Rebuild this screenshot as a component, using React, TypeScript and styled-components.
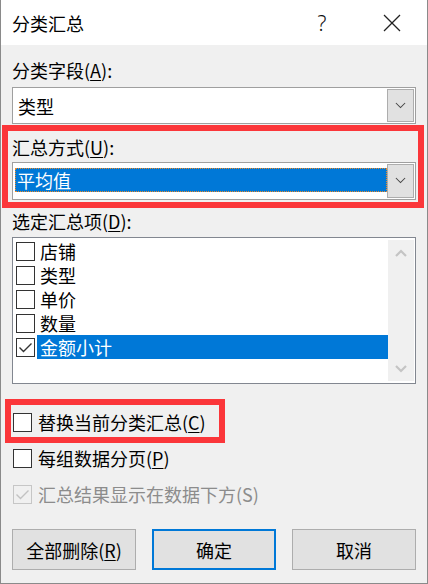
import React from "react";
import styled, { createGlobalStyle } from "styled-components";

const Global = createGlobalStyle`
  html, body { margin: 0; padding: 0; background: #f0f0f0; }
  body { font-family: "Noto Sans CJK SC", "Microsoft YaHei", sans-serif; }
  * { box-sizing: border-box; }
`;

const Window = styled.div`
  width: 428px;
  height: 584px;
  display: flex;
  flex-direction: column;
  background: #f0f0f0;
  border-left: 1px solid #8a8a8a;
  border-right: 1px solid #8a8a8a;
  border-bottom: 1px solid #8a8a8a;
  color: #000;
  font-size: 18px;
  overflow: hidden;
`;

const TitleBar = styled.div`
  height: 45px;
  flex: none;
  background: #fff;
  display: flex;
  align-items: center;
  padding-left: 11px;
`;

const Title = styled.div`
  flex: 1;
  line-height: 24px;
  font-size: 18px;
`;

const TitleButton = styled.div<{ $mr: number }>`
  width: 60px;
  height: 45px;
  margin-right: ${(p) => p.$mr}px;
  display: flex;
  align-items: center;
  justify-content: center;
  font-size: 21px;
  font-family: "Noto Sans", sans-serif;
  font-weight: 300;
  color: #111;
`;

const Body = styled.div`
  flex: 1;
  display: flex;
  flex-direction: column;
  padding: 13px 11px 0 11px;
`;

const Label = styled.div<{ $mt?: number }>`
  height: 24px;
  line-height: 24px;
  margin-top: ${(p) => p.$mt ?? 0}px;
  white-space: nowrap;
`;

const U = styled.span`
  text-decoration: underline;
  text-underline-offset: 2px;
`;

const Combo = styled.div<{ $mt: number; $h: number }>`
  margin-top: ${(p) => p.$mt}px;
  height: ${(p) => p.$h}px;
  border: 1px solid #9f9f9f;
  background: #fff;
  display: flex;
  align-items: center;
  padding: 1px;
`;

const ComboValue = styled.div<{ $selected?: boolean }>`
  flex: 1;
  align-self: ${(p) => (p.$selected ? "center" : "stretch")};
  height: ${(p) => (p.$selected ? "24px" : "auto")};
  margin: ${(p) => (p.$selected ? "0 0 2px 1px" : "0")};
  display: flex;
  align-items: center;
  padding-left: ${(p) => (p.$selected ? "2px" : "4px")};
  background: ${(p) => (p.$selected ? "#0078d7" : "transparent")};
  color: ${(p) => (p.$selected ? "#fff" : "#000")};
  outline: ${(p) => (p.$selected ? "1px dotted #f08a24" : "none")};
  outline-offset: -1px;
  line-height: 24px;
`;

const DropButton = styled.div`
  width: 27px;
  align-self: stretch;
  background: #e1e1e1;
  border: 1px solid #adadad;
  display: flex;
  align-items: center;
  justify-content: center;
`;

const Group = styled.div`
  position: relative;
  display: flex;
  flex-direction: column;
  margin-top: 11px;
`;

const RedFrame = styled.div<{ $t: number; $l: number; $r: number; $b: number }>`
  position: absolute;
  top: ${(p) => p.$t}px;
  left: ${(p) => p.$l}px;
  right: ${(p) => p.$r}px;
  bottom: ${(p) => p.$b}px;
  border: 6px solid #fb363a;
  pointer-events: none;
`;

const List = styled.div`
  margin-top: 4px;
  height: 147px;
  border: 1px solid #828790;
  background: #fff;
  display: flex;
  padding: 1px;
`;

const ListItems = styled.div`
  flex: 1;
  display: flex;
  flex-direction: column;
`;

const ListRow = styled.div`
  height: 24px;
  display: flex;
  align-items: center;
  padding-left: 2px;
`;

const ListText = styled.div<{ $selected?: boolean }>`
  flex: 1;
  height: 24px;
  line-height: 24px;
  margin-left: 2px;
  padding-left: 3px;
  background: ${(p) => (p.$selected ? "#0078d7" : "transparent")};
  color: ${(p) => (p.$selected ? "#fff" : "#000")};
`;

const ScrollBar = styled.div`
  width: 26px;
  margin-top: 1px;
  margin-bottom: 1px;
  background: #f0f0f0;
  display: flex;
  flex-direction: column;
  justify-content: space-between;
  align-items: center;
  padding: 9px 0 8px;
`;

const Box = styled.div<{ $disabled?: boolean }>`
  width: 19px;
  height: 19px;
  flex: none;
  border: 1px solid ${(p) => (p.$disabled ? "#c6c6c6" : "#333")};
  background: ${(p) => (p.$disabled ? "#f0f0f0" : "#fff")};
  display: flex;
  align-items: center;
  justify-content: center;
`;

const CheckRow = styled.div<{ $mt: number; $disabled?: boolean }>`
  position: relative;
  align-self: flex-start;
  margin-top: ${(p) => p.$mt}px;
  margin-left: 1px;
  height: 24px;
  display: flex;
  align-items: center;
  gap: 6px;
  line-height: 24px;
  color: ${(p) => (p.$disabled ? "#8c8c8c" : "#000")};
  white-space: nowrap;
`;

const CheckText = styled.span`
  line-height: 24px;
`;

const ButtonBar = styled.div`
  margin-top: 23px;
  display: flex;
  gap: 16px;
`;

const Button = styled.div<{ $default?: boolean }>`
  width: 125px;
  height: 41px;
  background: #e1e1e1;
  border: ${(p) => (p.$default ? "2px solid #0078d7" : "1px solid #adadad")};
  display: flex;
  align-items: center;
  justify-content: center;
  line-height: 24px;
`;

const Chevron = ({ color = "#444", up = false, w = 11 }: { color?: string; up?: boolean; w?: number }) => (
  <svg width={w} height={w / 2 + 2} viewBox="0 0 12 8">
    <polyline
      points={up ? "1,7 6,2 11,7" : "1,1 6,6 11,1"}
      fill="none"
      stroke={color}
      strokeWidth={w > 11 ? 2.2 : 1.1}
    />
  </svg>
);

const Tick = ({ color }: { color: string }) => (
  <svg width="15" height="15" viewBox="0 0 15 15">
    <polyline points="1.5,7.5 5.5,11.5 13.5,3.5" fill="none" stroke={color} strokeWidth="1.4" />
  </svg>
);

const items = ["店铺", "类型", "单价", "数量", "金额小计"];

export default function App() {
  return (
    <>
      <Global />
      <Window>
        <TitleBar>
          <Title>分类汇总</Title>
          <TitleButton $mr={10}>?</TitleButton>
          <TitleButton $mr={5}>
            <svg width="18" height="18" viewBox="0 0 18 18">
              <line x1="1" y1="1" x2="17" y2="17" stroke="#222" strokeWidth="1.2" />
              <line x1="17" y1="1" x2="1" y2="17" stroke="#222" strokeWidth="1.2" />
            </svg>
          </TitleButton>
        </TitleBar>
        <Body>
          <Label>
            分类字段(<U>A</U>):
          </Label>
          <Combo $mt={5} $h={37}>
            <ComboValue>类型</ComboValue>
            <DropButton>
              <Chevron />
            </DropButton>
          </Combo>

          <Group>
            <RedFrame $t={-10} $l={-10} $r={-8} $b={-8} />
            <Label>
              汇总方式(<U>U</U>):
            </Label>
            <Combo $mt={3} $h={38}>
              <ComboValue $selected>平均值</ComboValue>
              <DropButton>
                <Chevron />
              </DropButton>
            </Combo>
          </Group>

          <Label $mt={9}>
            选定汇总项(<U>D</U>):
          </Label>
          <List>
            <ListItems>
              {items.map((t, i) => (
                <ListRow key={t}>
                  <Box>{i === 4 && <Tick color="#333" />}</Box>
                  <ListText $selected={i === 4}>{t}</ListText>
                </ListRow>
              ))}
            </ListItems>
            <ScrollBar>
              <Chevron up color="#c4c4c4" w={12} />
              <Chevron color="#c4c4c4" w={12} />
            </ScrollBar>
          </List>

          <CheckRow $mt={26}>
            <RedFrame $t={-11} $l={-8} $r={-19} $b={-9} />
            <Box />
            <CheckText>
              替换当前分类汇总(<U>C</U>)
            </CheckText>
          </CheckRow>
          <CheckRow $mt={12}>
            <Box />
            <CheckText>
              每组数据分页(<U>P</U>)
            </CheckText>
          </CheckRow>
          <CheckRow $mt={12} $disabled>
            <Box $disabled>
              <Tick color="#c2c2c2" />
            </Box>
            <CheckText>汇总结果显示在数据下方(S)</CheckText>
          </CheckRow>

          <ButtonBar>
            <Button>
              <span>
                全部删除(<U>R</U>)
              </span>
            </Button>
            <Button $default>确定</Button>
            <Button>取消</Button>
          </ButtonBar>
        </Body>
      </Window>
    </>
  );
}
